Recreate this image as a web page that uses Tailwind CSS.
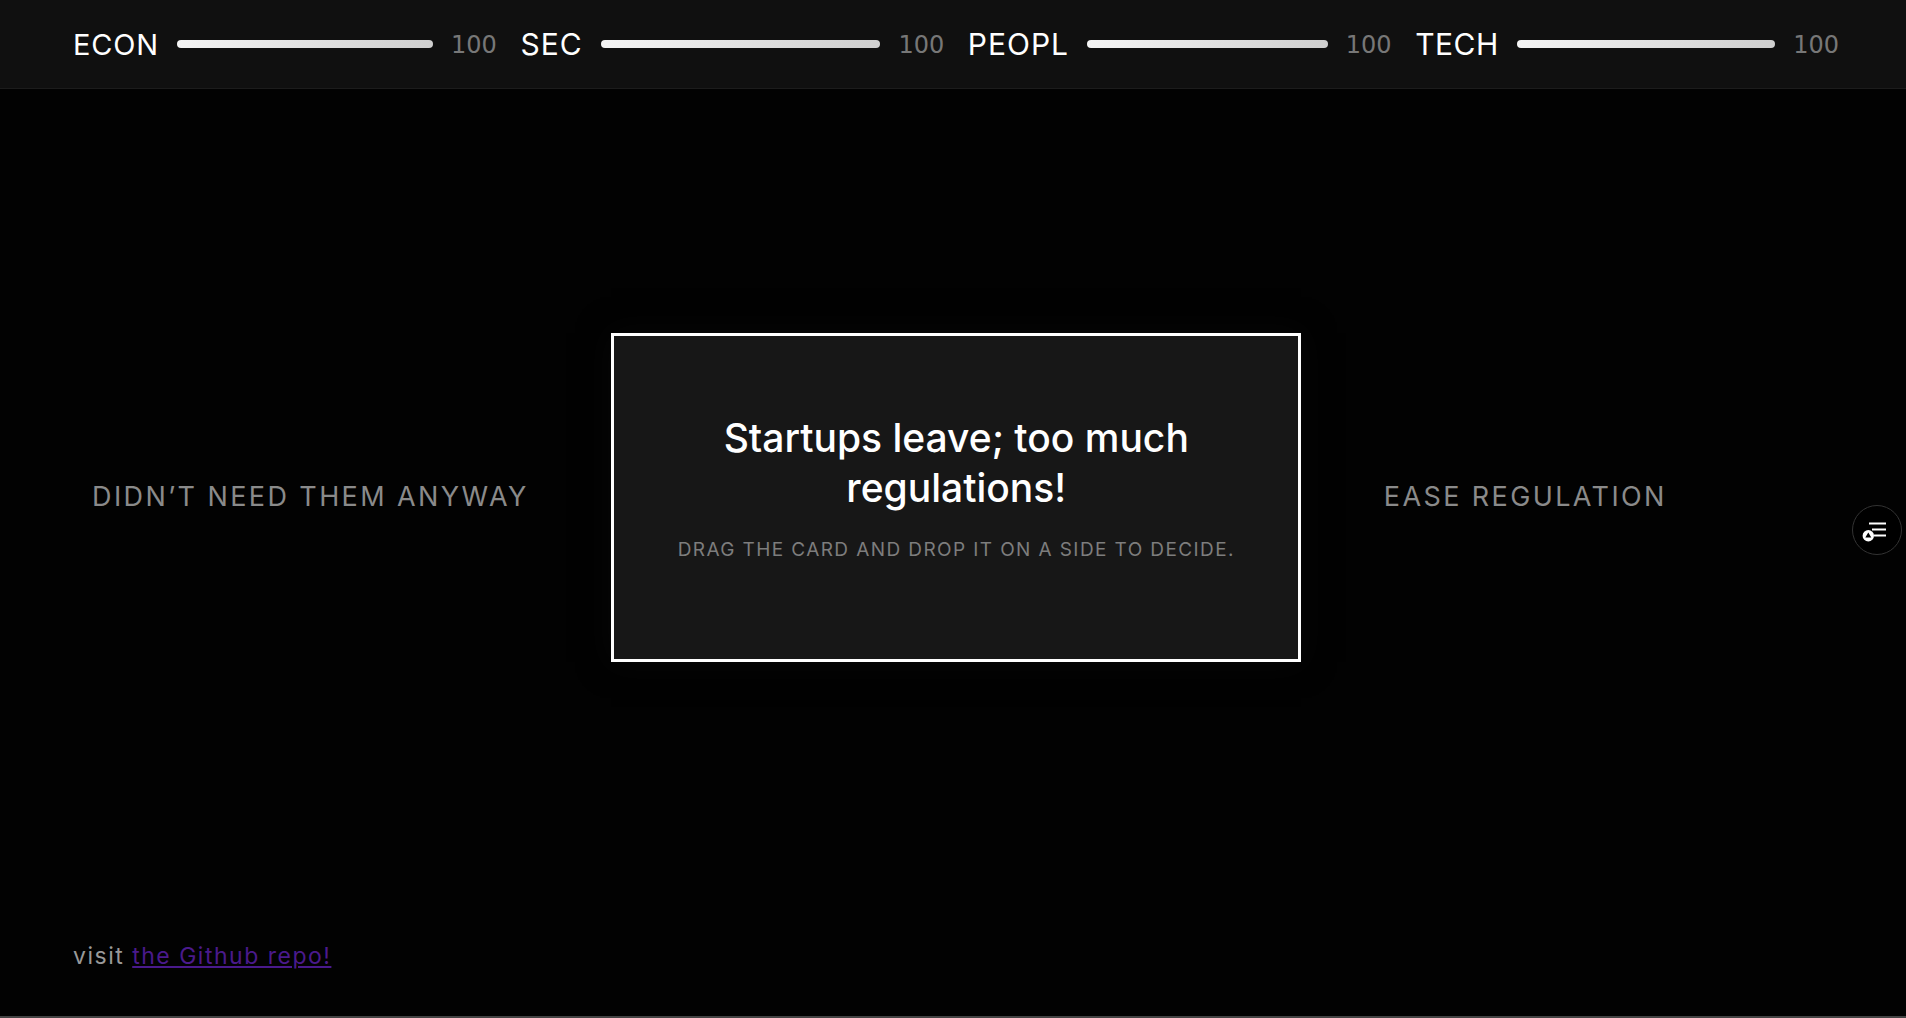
<!DOCTYPE html>
<html lang="en">

<head>
    <meta charset="UTF-8">
    <meta name="viewport" content="width=device-width, initial-scale=1.0">
    <title>Card game</title>
    <script src="https://cdn.jsdelivr.net/npm/@tailwindcss/browser@4"></script>
</head>

<body class="bg-[#020202] h-screen overflow-hidden font-['Inter',sans-serif] text-white flex flex-col relative">
    <header class="h-[89px] shrink-0 bg-[#101010] border-b border-[#1c1c1c] pl-[73px] pr-[67px] grid grid-cols-4 gap-x-[23.6px] items-center">
        <div class="flex items-center gap-[18px]">
            <span class="text-[29px] tracking-[0.8px] leading-none">ECON</span>
            <div class="flex-1 h-[8px] rounded-full bg-gradient-to-r from-[#f5f5f5] to-[#cfcfcf]"></div>
            <span class="font-['DejaVu_Sans',sans-serif] text-[24px] leading-none pt-[1px] text-[#777]">100</span>
        </div>
        <div class="flex items-center gap-[18px]">
            <span class="text-[30px] tracking-[1px] leading-none">SEC</span>
            <div class="flex-1 h-[8px] rounded-full bg-gradient-to-r from-[#f5f5f5] to-[#cfcfcf]"></div>
            <span class="font-['DejaVu_Sans',sans-serif] text-[24px] leading-none pt-[1px] text-[#777]">100</span>
        </div>
        <div class="flex items-center gap-[18px]">
            <span class="text-[30px] tracking-[1px] leading-none">PEOPL</span>
            <div class="flex-1 h-[8px] rounded-full bg-gradient-to-r from-[#f5f5f5] to-[#cfcfcf]"></div>
            <span class="font-['DejaVu_Sans',sans-serif] text-[24px] leading-none pt-[1px] text-[#777]">100</span>
        </div>
        <div class="flex items-center gap-[18px]">
            <span class="text-[30px] tracking-[0.5px] leading-none">TECH</span>
            <div class="flex-1 h-[8px] rounded-full bg-gradient-to-r from-[#f5f5f5] to-[#cfcfcf]"></div>
            <span class="font-['DejaVu_Sans',sans-serif] text-[24px] leading-none pt-[1px] text-[#777]">100</span>
        </div>
    </header>

    <main class="flex-1 flex flex-col">
        <div class="flex-1 flex items-center gap-[82.5px] pl-[92px] pb-[33px]">
            <div class="text-[27px] tracking-[2.4px] text-[#8a8a8a] whitespace-nowrap">DIDN’T NEED THEM ANYWAY</div>
            <div class="w-[690px] h-[329px] shrink-0 bg-[#171717] border-[3px] border-white flex flex-col items-center pt-[77px] shadow-[0_0_30px_rgba(14,14,14,0.5)]">
                <h1 class="text-[39px] leading-[50px] font-medium text-center w-[520px]">Startups leave; too much regulations!</h1>
                <p class="mt-[23px] text-[19px] tracking-[1.4px] text-[#7d7d7d]">DRAG THE CARD AND DROP IT ON A SIDE TO DECIDE.</p>
            </div>
            <div class="text-[27px] tracking-[2.4px] text-[#8a8a8a] whitespace-nowrap">EASE REGULATION</div>
        </div>
        <footer class="h-[77px] pl-[73px] text-[23px] tracking-[1.5px] text-[#999]">visit <a href="#" class="text-[#4a1a8c] underline">the Github repo!</a></footer>
    </main>

    <div class="h-[2px] shrink-0 bg-[#444]"></div>

    <button class="absolute right-[4px] top-[505px] w-[50px] h-[50px] rounded-full bg-black border border-[#333] flex items-center justify-center">
        <svg width="30" height="30" viewBox="0 0 30 30" fill="none">
            <path d="M7 8.5h17M10 14.5h14M12 20.5h12" stroke="white" stroke-width="2"/>
            <circle cx="6.3" cy="20.7" r="5.7" fill="white"/>
            <path d="M6.3 17.5l3 5h-6z" fill="black"/>
        </svg>
    </button>
</body>

</html>
